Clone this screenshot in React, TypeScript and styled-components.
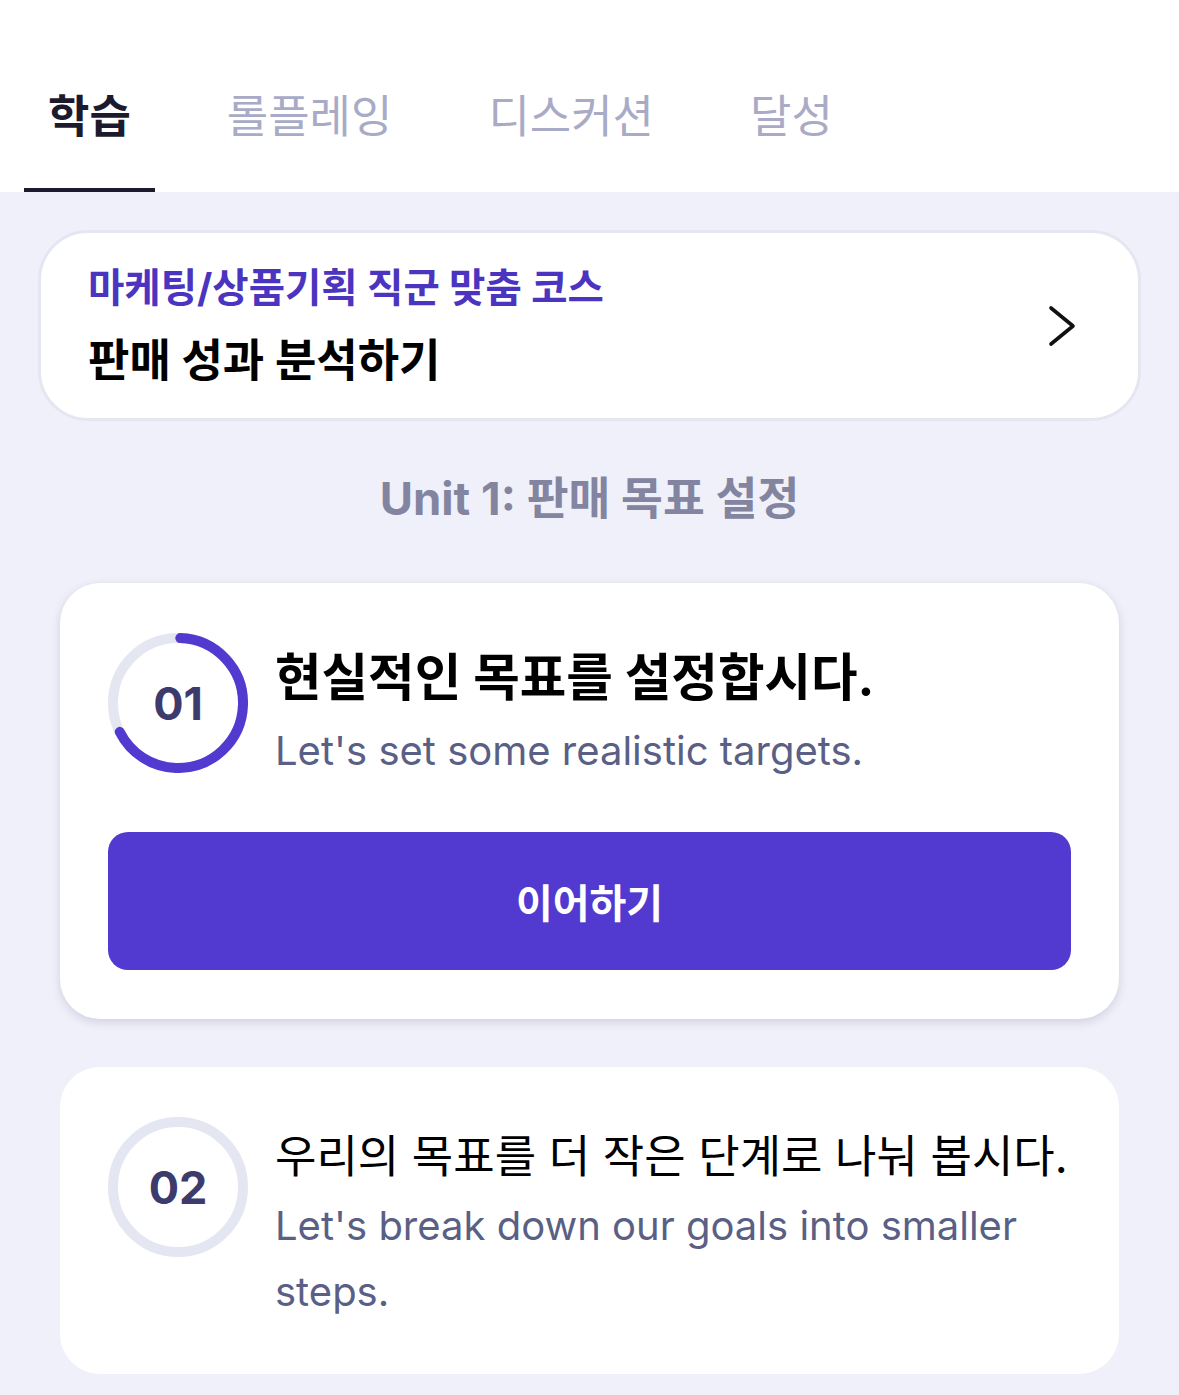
import styled, { createGlobalStyle } from "styled-components";

const GlobalStyle = createGlobalStyle`
  html, body {
    margin: 0;
    padding: 0;
    background: #f0f0fa;
  }
  body {
    font-family: Inter, "Noto Sans CJK KR", sans-serif;
  }
`;

const tabs = ["학습", "롤플레잉", "디스커션", "달성"];

type Step = {
  no: string;
  title: string;
  subtitle: string;
  progress: number;
  active: boolean;
};

const steps: Step[] = [
  {
    no: "01",
    title: "현실적인 목표를 설정합시다.",
    subtitle: "Let's set some realistic targets.",
    progress: 0.67,
    active: true,
  },
  {
    no: "02",
    title: "우리의 목표를 더 작은 단계로 나눠 봅시다.",
    subtitle: "Let's break down our goals into smaller steps.",
    progress: 0,
    active: false,
  },
];

function ProgressRing({ no, progress }: { no: string; progress: number }) {
  const r = 65;
  const c = 2 * Math.PI * r;
  return (
    <Ring>
      <svg width="140" height="140" viewBox="0 0 140 140">
        <circle cx="70" cy="70" r={r} fill="none" stroke="#e4e6f2" strokeWidth="10" />
        {progress > 0 && (
          <circle
            cx="70"
            cy="70"
            r={r}
            fill="none"
            stroke="#5239cf"
            strokeWidth="10"
            strokeLinecap="round"
            strokeDasharray={`${c * progress} ${c}`}
            transform="rotate(-88 70 70)"
          />
        )}
      </svg>
      <span className="no">{no}</span>
    </Ring>
  );
}

function StepCard({ step }: { step: Step }) {
  return (
    <StepCardStyled $active={step.active}>
      <div className="row">
        <ProgressRing no={step.no} progress={step.progress} />
        <div className="texts">
          <StepTitle $active={step.active}>{step.title}</StepTitle>
          <StepSubtitle>{step.subtitle}</StepSubtitle>
        </div>
      </div>
      {step.active && <ContinueButton>이어하기</ContinueButton>}
    </StepCardStyled>
  );
}

export default function App() {
  return (
    <>
      <GlobalStyle />
      <Header>
        {tabs.map((t, i) => (
          <Tab key={t} $active={i === 0}>
            {t}
          </Tab>
        ))}
      </Header>
      <Content>
        <CourseCard>
          <div className="texts">
            <p className="category">마케팅/상품기획 직군 맞춤 코스</p>
            <h2 className="name">판매 성과 분석하기</h2>
          </div>
          <svg width="30" height="42" viewBox="0 0 30 42" fill="none">
            <path
              d="M4 3 L26 21 L4 39"
              stroke="#111"
              strokeWidth="3.6"
              strokeLinecap="round"
              strokeLinejoin="round"
            />
          </svg>
        </CourseCard>
        <UnitTitle>Unit 1: 판매 목표 설정</UnitTitle>
        <StepList>
          {steps.map((s) => (
            <StepCard key={s.no} step={s} />
          ))}
        </StepList>
      </Content>
    </>
  );
}

const Header = styled.nav`
  display: flex;
  align-items: flex-end;
  gap: 48px;
  height: 192px;
  padding: 0 24px;
  background: #fff;
  box-sizing: border-box;
`;

const Tab = styled.div<{ $active: boolean }>`
  padding: 0 24px 41px;
  border-bottom: 4px solid ${(p) => (p.$active ? "#1c1b2e" : "transparent")};
  font-size: 45px;
  line-height: 60px;
  font-weight: ${(p) => (p.$active ? 700 : 400)};
  color: ${(p) => (p.$active ? "#1c1b2e" : "#a9abc6")};
`;

const Content = styled.main`
  padding: 38px 38px 24px;
`;

const CourseCard = styled.div`
  display: flex;
  align-items: center;
  justify-content: space-between;
  padding: 30px 61px 29px 47px;
  background: #fff;
  border: 3px solid #e4e6f2;
  border-radius: 50px;

  .texts {
    display: flex;
    flex-direction: column;
    gap: 20px;
  }
  .category {
    margin: 0;
    font-size: 39.5px;
    line-height: 50px;
    font-weight: 700;
    color: #4b34c0;
  }
  .name {
    margin: 0;
    font-size: 45px;
    line-height: 56px;
    font-weight: 700;
    color: #000;
  }
`;

const UnitTitle = styled.h3`
  margin: 48px 0 54px;
  text-align: center;
  font-size: 45.5px;
  line-height: 60px;
  font-weight: 700;
  color: #8385a0;
`;

const StepList = styled.div`
  display: flex;
  flex-direction: column;
  gap: 48px;
  padding: 0 22px;
`;

const StepCardStyled = styled.section<{ $active: boolean }>`
  padding: 50px 48px 49px;
  background: #fff;
  border-radius: 40px;
  box-shadow: ${(p) =>
    p.$active ? "0 3px 10px rgba(60, 60, 110, 0.18)" : "none"};

  .row {
    display: flex;
    align-items: flex-start;
    gap: 27px;
  }
  .texts {
    display: flex;
    flex-direction: column;
    gap: ${(p) => (p.$active ? "7px" : "5px")};
    padding-top: ${(p) => (p.$active ? "12px" : "9px")};
  }
`;

const Ring = styled.div`
  position: relative;
  flex: 0 0 140px;
  width: 140px;
  height: 140px;

  .no {
    position: absolute;
    inset: 0;
    display: flex;
    align-items: center;
    justify-content: center;
    font-size: 45px;
    font-weight: 700;
    color: #3d3b6b;
  }
`;

const StepTitle = styled.h4<{ $active: boolean }>`
  margin: 0;
  font-size: ${(p) => (p.$active ? "50.6px" : "45px")};
  line-height: ${(p) => (p.$active ? "66px" : "62px")};
  font-weight: ${(p) => (p.$active ? 700 : 400)};
  color: #000;
`;

const StepSubtitle = styled.p`
  margin: 0;
  font-size: 40px;
  line-height: 66px;
  color: #5a5f85;
`;

const ContinueButton = styled.button`
  display: block;
  width: 100%;
  height: 138px;
  margin-top: 48px;
  border: none;
  border-radius: 20px;
  background: #5239cf;
  color: #fff;
  font-family: Inter, "Noto Sans CJK KR", sans-serif;
  font-size: 40px;
  font-weight: 700;
  cursor: pointer;
`;
